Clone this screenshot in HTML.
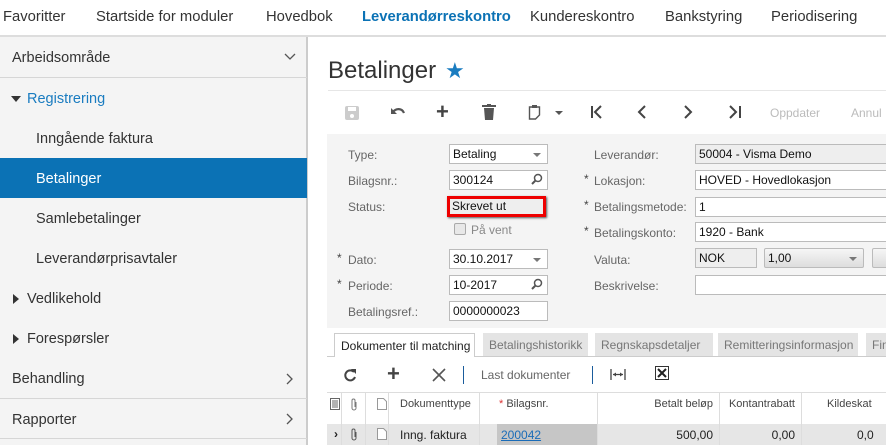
<!DOCTYPE html>
<html><head><meta charset="utf-8"><style>
*{box-sizing:border-box;margin:0;padding:0}
body{width:886px;height:445px;overflow:hidden;background:#fff;font-family:"Liberation Sans",Arial,sans-serif;position:relative;color:#222}
.a{position:absolute;white-space:nowrap}
.nav{font-size:14.8px;color:#333;top:9px}
.sb{font-size:14.5px;color:#333;margin-top:2px}
.lbl{font-size:12px;color:#666}
.inp{position:absolute;height:20px;border:1px solid #bbb;background:#fff;font-size:12px;padding:2px 3px;color:#111;white-space:nowrap;overflow:hidden}
.gray{background:#eee}
.dd::after{content:"";position:absolute;right:6px;top:8px;border:4px solid transparent;border-top:4px solid #777;border-bottom:0}
.ast{font-size:12px;color:#444}
.tab{position:absolute;top:333px;height:23px;background:#e4e4e4;font-size:12px;color:#777;padding:5px 6px;white-space:nowrap}
.th{font-size:11px;color:#444;top:398px}
.vl{position:absolute;width:1px;background:#ddd}
</style></head><body>
<!-- top nav -->
<div class="a nav" style="left:3px">Favoritter</div>
<div class="a nav" style="left:96px">Startside for moduler</div>
<div class="a nav" style="left:266px">Hovedbok</div>
<div class="a nav" style="left:362px;color:#0b72b5;font-weight:bold">Leverandørreskontro</div>
<div class="a nav" style="left:530px">Kundereskontro</div>
<div class="a nav" style="left:665px">Bankstyring</div>
<div class="a nav" style="left:771px">Periodisering</div>
<div class="a" style="left:0;top:35px;width:886px;height:2px;background:#ddd"></div>
<!-- sidebar -->
<div class="a" style="left:0;top:37px;width:308px;height:408px;background:#f4f4f4;border-right:2px solid #ccc"></div>
<div class="a sb" style="left:12px;top:48px">Arbeidsområde</div>
<svg class="a" style="left:284px;top:53px" width="12" height="8"><path d="M1 1l5 5 5-5" fill="none" stroke="#555" stroke-width="1.3"/></svg>
<div class="a" style="left:0;top:77px;width:307px;height:1px;background:#d6d6d6"></div>
<svg class="a" style="left:11px;top:96px" width="10" height="6"><path d="M0 0h10L5 6z" fill="#333"/></svg>
<div class="a sb" style="left:27px;top:89px;color:#1a7cc0">Registrering</div>
<div class="a sb" style="left:36px;top:129px">Inngående faktura</div>
<div class="a" style="left:0;top:158px;width:307px;height:40px;background:#0b72b5"></div>
<div class="a sb" style="left:36px;top:169px;color:#fff">Betalinger</div>
<div class="a sb" style="left:36px;top:209px">Samlebetalinger</div>
<div class="a sb" style="left:36px;top:249px">Leverandørprisavtaler</div>
<svg class="a" style="left:13px;top:294px" width="6" height="10"><path d="M0 0l6 5-6 5z" fill="#333"/></svg>
<div class="a sb" style="left:27px;top:289px">Vedlikehold</div>
<svg class="a" style="left:13px;top:334px" width="6" height="10"><path d="M0 0l6 5-6 5z" fill="#333"/></svg>
<div class="a sb" style="left:27px;top:329px">Forespørsler</div>
<div class="a sb" style="left:12px;top:369px">Behandling</div>
<svg class="a" style="left:286px;top:373px" width="8" height="12"><path d="M1 1l5 5-5 5" fill="none" stroke="#555" stroke-width="1.3"/></svg>
<div class="a" style="left:0;top:398px;width:307px;height:1px;background:#d6d6d6"></div>
<div class="a sb" style="left:12px;top:410px">Rapporter</div>
<svg class="a" style="left:286px;top:413px" width="8" height="12"><path d="M1 1l5 5-5 5" fill="none" stroke="#555" stroke-width="1.3"/></svg>
<div class="a" style="left:0;top:438px;width:307px;height:1px;background:#d6d6d6"></div>
<!-- title -->
<div class="a" style="left:328px;top:57px;font-size:24px;color:#333">Betalinger</div>
<div class="a" style="left:445px;top:58px;font-size:22px;color:#1a7cc0">★</div>
<div class="a" style="left:328px;top:90px;width:558px;height:1px;background:#e6e6e6"></div>
<!-- toolbar -->
<svg class="a" style="left:344px;top:105px" width="16" height="16"><rect x="1" y="1" width="14" height="14" rx="2" fill="#ccc"/><rect x="4" y="2" width="8" height="4" fill="#fff"/><circle cx="8" cy="11" r="2" fill="#fff"/></svg>
<svg class="a" style="left:390px;top:106px" width="16" height="12"><path d="M3 6c3-4 9-4 11 1" fill="none" stroke="#555" stroke-width="2.2"/><path d="M1 2v6h6z" fill="#555"/></svg>
<div class="a" style="left:436px;top:99px;font-size:22px;font-weight:bold;color:#444">+</div>
<svg class="a" style="left:482px;top:104px" width="14" height="16"><rect x="0" y="1" width="14" height="2" fill="#555"/><rect x="5" y="0" width="4" height="2" fill="#555"/><path d="M2 4h10l-1 12H3z" fill="#555"/></svg>
<svg class="a" style="left:528px;top:104px" width="14" height="16"><path d="M1.5 3h10v8l-4 4h-6z" fill="none" stroke="#555" stroke-width="1.4"/><rect x="4" y="1" width="5" height="3" fill="#555"/></svg>
<svg class="a" style="left:555px;top:111px" width="8" height="5"><path d="M0 0h8L4 4z" fill="#555"/></svg>
<svg class="a" style="left:590px;top:105px" width="14" height="14"><path d="M2 1v12M11 1L5 7l6 6" fill="none" stroke="#444" stroke-width="2"/></svg>
<svg class="a" style="left:637px;top:105px" width="10" height="14"><path d="M8 1L2 7l6 6" fill="none" stroke="#444" stroke-width="2"/></svg>
<svg class="a" style="left:683px;top:105px" width="10" height="14"><path d="M2 1l6 6-6 6" fill="none" stroke="#444" stroke-width="2"/></svg>
<svg class="a" style="left:728px;top:105px" width="14" height="14"><path d="M2 1l6 6-6 6M12 1v12" fill="none" stroke="#444" stroke-width="2"/></svg>
<div class="a" style="left:770px;top:106px;font-size:12px;color:#bbb">Oppdater</div>
<div class="a" style="left:851px;top:106px;font-size:12px;color:#bbb">Annul</div>
<!-- form panel -->
<div class="a" style="left:327px;top:134px;width:559px;height:194px;background:#f4f4f4"></div>
<div class="a lbl" style="left:348px;top:148px">Type:</div>
<div class="inp dd" style="left:449px;top:144px;width:99px">Betaling</div>
<div class="a lbl" style="left:348px;top:174px">Bilagsnr.:</div>
<div class="inp" style="left:449px;top:170px;width:99px">300124</div>
<svg class="a" style="left:531px;top:173px" width="12" height="12"><circle cx="7" cy="5" r="3.5" fill="none" stroke="#555" stroke-width="1.5"/><path d="M4.5 7.5L1 11" stroke="#555" stroke-width="2"/></svg>
<div class="a lbl" style="left:348px;top:200px">Status:</div>
<div class="inp gray" style="left:447px;top:196px;width:99px;border:3px solid #e00;padding:0 2px;height:21px;box-shadow:1px 1px 2px #555">Skrevet ut</div>
<div class="a" style="left:454px;top:223px;width:12px;height:12px;border:1px solid #aaa;background:#e8e8e8;border-radius:2px"></div>
<div class="a lbl" style="left:471px;top:223px;color:#888">På vent</div>
<div class="a ast" style="left:337px;top:251px">*</div>
<div class="a lbl" style="left:348px;top:253px">Dato:</div>
<div class="inp dd" style="left:449px;top:249px;width:99px">30.10.2017</div>
<div class="a ast" style="left:337px;top:277px">*</div>
<div class="a lbl" style="left:348px;top:279px">Periode:</div>
<div class="inp" style="left:449px;top:275px;width:99px">10-2017</div>
<svg class="a" style="left:531px;top:278px" width="12" height="12"><circle cx="7" cy="5" r="3.5" fill="none" stroke="#555" stroke-width="1.5"/><path d="M4.5 7.5L1 11" stroke="#555" stroke-width="2"/></svg>
<div class="a lbl" style="left:348px;top:305px">Betalingsref.:</div>
<div class="inp" style="left:449px;top:301px;width:99px">0000000023</div>

<div class="a lbl" style="left:594px;top:148px">Leverandør:</div>
<div class="inp gray" style="left:695px;top:144px;width:200px">50004 - Visma Demo</div>
<div class="a ast" style="left:584px;top:172px">*</div>
<div class="a lbl" style="left:594px;top:174px">Lokasjon:</div>
<div class="inp" style="left:695px;top:170px;width:200px">HOVED - Hovedlokasjon</div>
<div class="a ast" style="left:584px;top:198px">*</div>
<div class="a lbl" style="left:594px;top:200px">Betalingsmetode:</div>
<div class="inp" style="left:695px;top:197px;width:200px">1</div>
<div class="a ast" style="left:584px;top:224px">*</div>
<div class="a lbl" style="left:594px;top:226px">Betalingskonto:</div>
<div class="inp" style="left:695px;top:222px;width:200px">1920 - Bank</div>
<div class="a lbl" style="left:594px;top:253px">Valuta:</div>
<div class="inp gray" style="left:695px;top:248px;width:62px">NOK</div>
<div class="inp dd" style="left:764px;top:248px;width:100px;background:linear-gradient(#f6f6f6,#ddd);border-radius:2px">1,00</div>
<div class="inp" style="left:872px;top:248px;width:30px;background:linear-gradient(#f6f6f6,#ddd);border-radius:2px"></div>
<div class="a lbl" style="left:594px;top:279px">Beskrivelse:</div>
<div class="inp" style="left:695px;top:275px;width:200px"></div>
<!-- tabs -->
<div class="a" style="left:327px;top:356px;width:559px;height:1px;background:#ccc"></div>
<div class="tab" style="left:334px;width:141px;background:#fff;color:#222;border:1px solid #ccc;border-bottom:none;height:24px">Dokumenter til matching</div>
<div class="tab" style="left:483px;width:105px">Betalingshistorikk</div>
<div class="tab" style="left:595px;width:118px">Regnskapsdetaljer</div>
<div class="tab" style="left:718px;width:140px">Remitteringsinformasjon</div>
<div class="tab" style="left:866px;width:30px">Fin</div>
<!-- grid toolbar -->
<svg class="a" style="left:343px;top:368px" width="14" height="14"><path d="M11 4A5 5 0 1 0 12 9" fill="none" stroke="#444" stroke-width="2"/><path d="M8 1h5v5z" fill="#444"/></svg>
<div class="a" style="left:387px;top:361px;font-size:22px;font-weight:bold;color:#444">+</div>
<svg class="a" style="left:432px;top:368px" width="14" height="14"><path d="M1 1l12 12M13 1L1 13" stroke="#555" stroke-width="1.6"/></svg>
<div class="a" style="left:463px;top:366px;width:1px;height:18px;background:#1a5c9c"></div>
<div class="a" style="left:481px;top:368px;font-size:12px;color:#666">Last dokumenter</div>
<div class="a" style="left:592px;top:366px;width:1px;height:18px;background:#1a5c9c"></div>
<svg class="a" style="left:610px;top:368px" width="16" height="13"><path d="M1 1v11M15 1v11M3 6.5h10" stroke="#444" stroke-width="1.3"/><path d="M3 6.5l3-2v4zM13 6.5l-3-2v4z" fill="#444"/></svg>
<svg class="a" style="left:655px;top:366px" width="14" height="14"><rect x="0.5" y="0.5" width="13" height="13" fill="#fff" stroke="#333"/><path d="M3 3l8 8M11 3l-8 8" stroke="#222" stroke-width="2"/></svg>
<!-- grid -->
<div class="a" style="left:327px;top:392px;width:559px;height:1px;background:#ddd"></div>
<div class="a" style="left:327px;top:424px;width:559px;height:21px;background:#e6e6e6"></div>
<div class="a" style="left:497px;top:424px;width:100px;height:21px;background:#c6c6c6"></div>
<div class="vl" style="left:341px;top:392px;height:53px"></div>
<div class="vl" style="left:365px;top:392px;height:53px"></div>
<div class="vl" style="left:388px;top:392px;height:53px"></div>
<div class="vl" style="left:479px;top:392px;height:53px"></div>
<div class="vl" style="left:597px;top:392px;height:53px"></div>
<div class="vl" style="left:719px;top:392px;height:53px"></div>
<div class="vl" style="left:801px;top:392px;height:53px"></div>
<svg class="a" style="left:330px;top:398px" width="10" height="12"><rect x="0.5" y="0.5" width="9" height="11" fill="none" stroke="#666"/><path d="M2 3h6M2 5h6M2 7h6M2 9h6" stroke="#666"/></svg>
<svg class="a" style="left:350px;top:398px" width="8" height="13"><path d="M6 4v6a2 2 0 0 1-4 0V2.5a1.5 1.5 0 0 1 3 0V9" fill="none" stroke="#777" stroke-width="1"/></svg>
<svg class="a" style="left:377px;top:398px" width="10" height="12"><path d="M0.5 0.5h6l3 3v8h-9z" fill="#fff" stroke="#999"/></svg>
<div class="a th" style="left:400px">Dokumenttype</div>
<div class="a th" style="left:499px"><span style="color:#d33">*</span> Bilagsnr.</div>
<div class="a th" style="left:597px;width:116px;text-align:right">Betalt beløp</div>
<div class="a th" style="left:719px;width:76px;text-align:right">Kontantrabatt</div>
<div class="a th" style="left:827px">Kildeskat</div>
<div class="a" style="left:334px;top:427px;font-size:12px;font-weight:bold">›</div>
<svg class="a" style="left:350px;top:428px" width="8" height="13"><path d="M6 4v6a2 2 0 0 1-4 0V2.5a1.5 1.5 0 0 1 3 0V9" fill="none" stroke="#555" stroke-width="1"/></svg>
<svg class="a" style="left:377px;top:428px" width="10" height="12"><path d="M0.5 0.5h6l3 3v8h-9z" fill="#fff" stroke="#999"/></svg>
<div class="a" style="left:400px;top:428px;font-size:12px">Inng. faktura</div>
<div class="a" style="left:501px;top:428px;font-size:12px;color:#1a6cb8;text-decoration:underline">200042</div>
<div class="a" style="left:597px;top:428px;width:116px;text-align:right;font-size:12px">500,00</div>
<div class="a" style="left:719px;top:428px;width:76px;text-align:right;font-size:12px">0,00</div>
<div class="a" style="left:857px;top:428px;font-size:12px">0,0</div>
</body></html>
